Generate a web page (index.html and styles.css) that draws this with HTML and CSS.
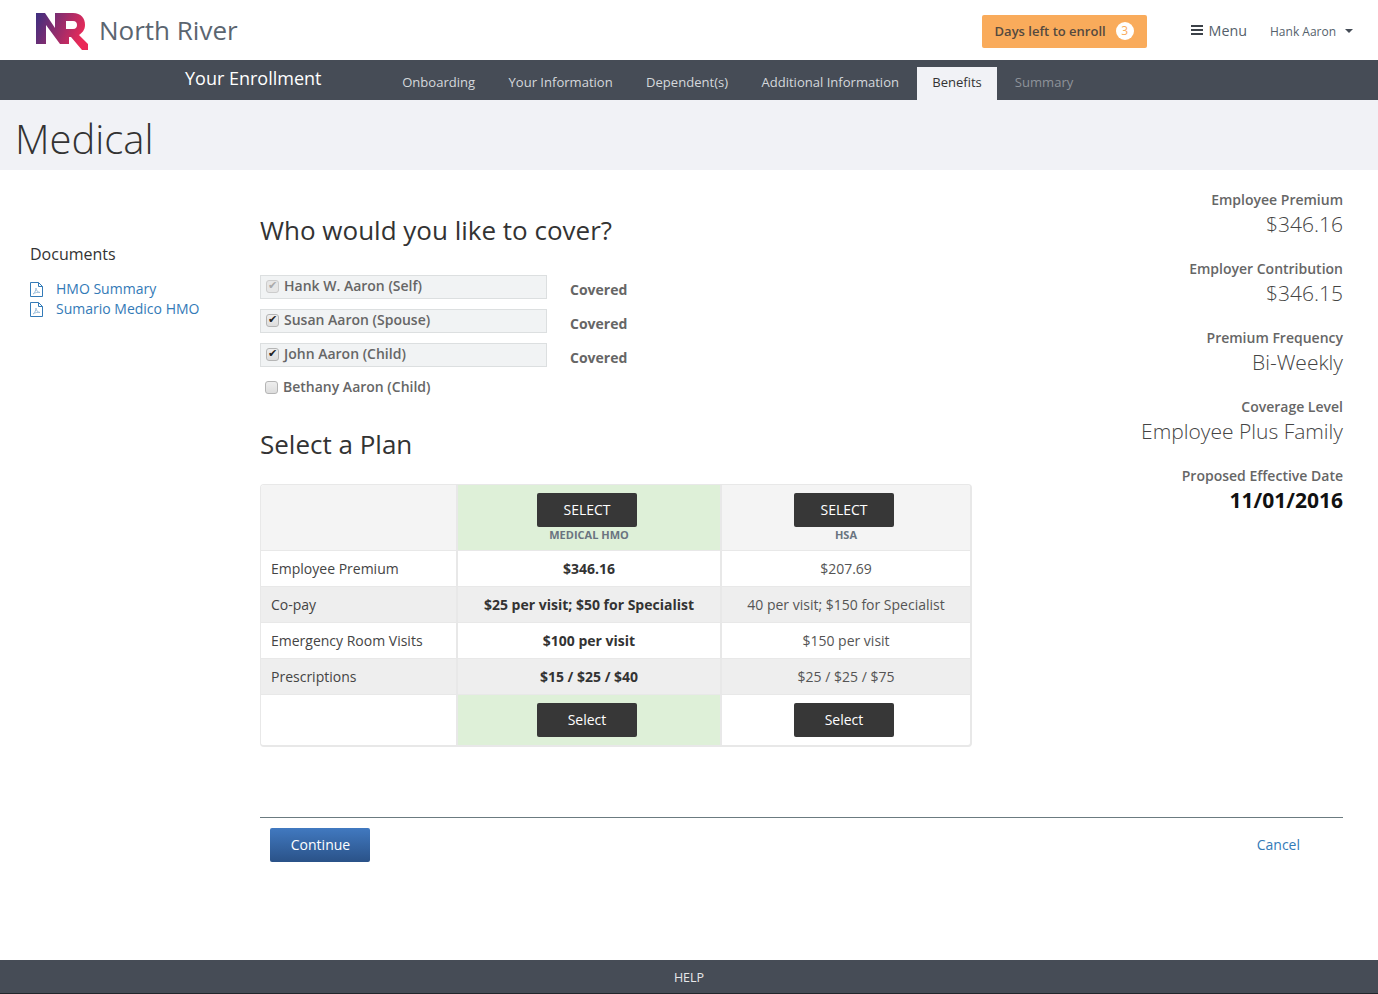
FILE: index.html
```html
<!DOCTYPE html>
<html>
<head>
    <meta charset="utf-8"/>
    <title>Medical</title>
    <link rel="stylesheet" href="styles.css">
</head>
<body>
<div class="topbar">
    <div class="brand">
        <svg class="logo" width="54" height="38" viewBox="0 0 54 38">
            <defs>
                <linearGradient id="nr" x1="0" y1="0" x2="1" y2="0.3">
                    <stop offset="0" stop-color="#3c2f80"/>
                    <stop offset="1" stop-color="#ea2a58"/>
                </linearGradient>
            </defs>
            <path fill="url(#nr)" fill-rule="evenodd" d="M1 0H10L20 15V0H38C46 0 50 5 50 12C50 17 47 20 44 22L53 31V37H47L36 24H34V31H25L11 12V31H1ZM31 8V16H38C41 16 42 14 42 12C42 10 41 8 38 8Z"/>
        </svg>
        <span class="brand-name">North River</span>
    </div>
    <div class="top-right">
        <a class="days">Days left to enroll <span class="days-count">3</span></a>
        <a class="menu"><span class="burger"></span>Menu</a>
        <a class="user">Hank Aaron <span class="caret"></span></a>
    </div>
</div>
<div class="navbar">
    <div class="nav-title">Your Enrollment</div>
    <ul class="tabs">
        <li>Onboarding</li>
        <li>Your Information</li>
        <li>Dependent(s)</li>
        <li>Additional Information</li>
        <li class="active">Benefits</li>
        <li class="muted">Summary</li>
    </ul>
</div>
<div class="title-band"><h1>Medical</h1></div>

<div class="page">
    <div class="sidebar">
        <h4>Documents</h4>
        <a class="doc">
            <svg width="13" height="15" viewBox="0 0 13 15"><path fill="none" stroke="#337ab7" d="M.5 .5H8.500L12.500 4.500V14.500H.5ZM8.500 .5V4.500H12.500"/><path fill="none" stroke="#9dbfdc" d="M3 12C5 10.500 6 8 6 6C6 8.500 8 10.500 10 10.500C8 10 5 10.500 3 12Z"/></svg>
            HMO Summary
        </a>
        <a class="doc">
            <svg width="13" height="15" viewBox="0 0 13 15"><path fill="none" stroke="#337ab7" d="M.5 .5H8.500L12.500 4.500V14.500H.5ZM8.500 .5V4.500H12.500"/><path fill="none" stroke="#9dbfdc" d="M3 12C5 10.500 6 8 6 6C6 8.500 8 10.500 10 10.500C8 10 5 10.500 3 12Z"/></svg>
            Sumario Medico HMO
        </a>
    </div>
    <div class="content">
        <div class="content-top">
            <div class="center">
                <h2>Who would you like to cover?</h2>
                <div class="person">
                    <label class="check on"><input type="checkbox" checked disabled>Hank W. Aaron (Self)</label>
                    <b>Covered</b>
                </div>
                <div class="person">
                    <label class="check on"><input type="checkbox" checked>Susan Aaron (Spouse)</label>
                    <b>Covered</b>
                </div>
                <div class="person">
                    <label class="check on"><input type="checkbox" checked>John Aaron (Child)</label>
                    <b>Covered</b>
                </div>
                <div class="person">
                    <label class="check last"><input type="checkbox">Bethany Aaron (Child)</label>
                </div>
                <h2 class="plan-head">Select a Plan</h2>
                <div class="plan-wrap">
                    <table class="plans">
                        <tr class="head">
                            <td class="c1"></td>
                            <td class="c2 green"><a class="btn-dark caps">SELECT</a><div class="plan-name">MEDICAL HMO</div></td>
                            <td class="c3"><a class="btn-dark caps">SELECT</a><div class="plan-name">HSA</div></td>
                        </tr>
                        <tr>
                            <td class="c1">Employee Premium</td>
                            <td class="c2"><b>$346.16</b></td>
                            <td class="c3">$207.69</td>
                        </tr>
                        <tr class="alt">
                            <td class="c1">Co-pay</td>
                            <td class="c2"><b>$25 per visit; $50 for Specialist</b></td>
                            <td class="c3">40 per visit; $150 for Specialist</td>
                        </tr>
                        <tr>
                            <td class="c1">Emergency Room Visits</td>
                            <td class="c2"><b>$100 per visit</b></td>
                            <td class="c3">$150 per visit</td>
                        </tr>
                        <tr class="alt">
                            <td class="c1">Prescriptions</td>
                            <td class="c2"><b>$15 / $25 / $40</b></td>
                            <td class="c3">$25 / $25 / $75</td>
                        </tr>
                        <tr class="foot">
                            <td class="c1"></td>
                            <td class="c2 green"><a class="btn-dark">Select</a></td>
                            <td class="c3"><a class="btn-dark">Select</a></td>
                        </tr>
                    </table>
                </div>
            </div>
            <div class="summary">
                <div class="sum-item"><label>Employee Premium</label><div class="sum-val">$346.16</div></div>
                <div class="sum-item"><label>Employer Contribution</label><div class="sum-val">$346.15</div></div>
                <div class="sum-item"><label>Premium Frequency</label><div class="sum-val">Bi-Weekly</div></div>
                <div class="sum-item"><label>Coverage Level</label><div class="sum-val">Employee Plus Family</div></div>
                <div class="sum-item"><label>Proposed Effective Date</label><div class="sum-val date">11/01/2016</div></div>
            </div>
        </div>
        <div class="actions">
            <a class="btn-blue">Continue</a>
            <a class="cancel">Cancel</a>
        </div>
    </div>
</div>
<div class="footer">HELP</div>
</body>
</html>
```

FILE: styles.css
```css
* {
    box-sizing: border-box;
}
html, body {
    margin: 0;
    padding: 0;
}
body {
    font-family: "Open Sans", "Liberation Sans", sans-serif;
    font-size: 14px;
    color: #333;
    background: #fff;
    height: 994px;
    display: flex;
    flex-direction: column;
    overflow: hidden;
}
a {
    text-decoration: none;
}
h1, h2, h4 {
    margin: 0;
    font-weight: 400;
}

/* top bar */
.topbar {
    height: 60px;
    display: flex;
    justify-content: space-between;
    align-items: center;
    padding: 0 0 0 35px;
}
.brand {
    display: flex;
    align-items: center;
}
.logo {
    margin-top: 3px;
}
.brand-name {
    font-size: 26px;
    color: #5b6570;
    margin-left: 10px;
}
.top-right {
    display: flex;
    align-items: center;
}
.days {
    width: 165px;
    height: 33px;
    margin-top: 3px;
    background: #f9ab5b;
    border-radius: 2px;
    color: #54493f;
    font-weight: 600;
    font-size: 13px;
    display: flex;
    align-items: center;
    padding: 0 0 2px 13px;
}
.days-count {
    width: 18px;
    height: 18px;
    border-radius: 50%;
    background: #fff;
    color: #f9ab5b;
    font-size: 12px;
    font-weight: 400;
    text-align: center;
    line-height: 18px;
    margin-left: 10px;
}
.menu {
    display: flex;
    align-items: center;
    color: #555f6b;
    font-size: 14.300px;
    margin-left: 44px;
}
.burger {
    width: 12px;
    height: 10px;
    border-top: 2px solid #3b4148;
    border-bottom: 2px solid #3b4148;
    margin-right: 6px;
}
.burger::after {
    content: "";
    display: block;
    height: 2px;
    margin-top: 2px;
    background: #3b4148;
}
.user {
    color: #555f6b;
    font-size: 12px;
    margin: 2px 0 0 23px;
    width: 108px;
    display: flex;
    align-items: center;
}
.caret {
    width: 0;
    height: 0;
    border-left: 4px solid transparent;
    border-right: 4px solid transparent;
    border-top: 4px solid #454c56;
    margin-left: 9px;
}

/* nav */
.navbar {
    height: 40px;
    background: #464c56;
    display: flex;
    padding-left: 185px;
}
.nav-title {
    color: #fff;
    font-size: 18px;
    line-height: 36px;
    width: 200.500px;
}
.tabs {
    list-style: none;
    margin: 7px 0 0;
    padding: 0;
    display: flex;
}
.tabs li {
    height: 33px;
    padding: 0 16.700px;
    line-height: 31px;
    font-size: 13.050px;
    color: #d5d8dc;
}
.tabs li.active {
    background: #f1f2f6;
    color: #333;
    padding: 0 15px;
    margin-left: 1.500px;
}
.tabs li.muted {
    color: #8e939a;
    padding: 0 18px;
}
.title-band {
    height: 70px;
    background: #f1f2f6;
    padding-left: 15px;
}
.title-band h1 {
    font-size: 40px;
    font-weight: 300;
    line-height: 77px;
    color: #333;
}

/* body columns */
.page {
    flex: 1;
    display: flex;
}
.sidebar {
    width: 260px;
    padding: 73px 0 0 30px;
}
.sidebar h4 {
    font-size: 16px;
    line-height: 22px;
    margin-bottom: 14px;
}
.doc {
    display: flex;
    align-items: center;
    color: #337ab7;
    font-size: 14px;
    line-height: 20px;
}
.doc svg {
    margin-right: 13px;
}
.content {
    width: 1083px;
}
.content-top {
    display: flex;
    justify-content: space-between;
    height: 647px;
}
.center {
    width: 712px;
}
.center h2 {
    font-size: 26px;
    line-height: 34px;
    color: #333;
    margin: 43px 0 28px;
}
.center h2.plan-head {
    margin: 16px 0 23px;
}
.person {
    display: flex;
    height: 34px;
}
.person b {
    font-weight: 700;
    color: #666;
    margin-left: 23px;
    line-height: 30px;
}
.check {
    width: 287px;
    height: 24px;
    display: flex;
    align-items: center;
    font-weight: 600;
    color: #666;
    padding: 0 0 3px 5px;
}
.check.on {
    background: #f1f3f4;
    border: 1px solid #dcdfe0;
}
.check.last {
    margin-top: -1px;
    padding-left: 5px;
}
.check input {
    appearance: none;
    margin: 1px 5px 0 0;
    width: 13px;
    height: 13px;
    border: 1px solid #b5b5b5;
    border-radius: 3px;
    background: linear-gradient(#eee, #ddd);
    position: relative;
}
.check input:checked::before {
    content: "\2714";
    position: absolute;
    top: -1px;
    left: 1px;
    font: 11px/12px "DejaVu Sans", sans-serif;
    color: #222;
}
.check input:disabled {
    border-color: #ccc;
    background: #e6e6e6;
}
.check input:disabled::before {
    color: #aaa;
}
.plan-wrap {
    border: 1px solid #e8e8e8;
    border-width: 1px 2px 2px 1px;
    border-radius: 4px;
    overflow: hidden;
    width: 712px;
}
.plans {
    border-collapse: collapse;
    table-layout: fixed;
    width: 709px;
}
.plans td {
    height: 36px;
    padding: 0;
    text-align: center;
    border: 2px solid #e8e8e8;
    border-top: 0;
    border-left: 0;
    border-bottom: 1px solid #e8e8e8;
}
.plans .c1 {
    width: 196px;
    text-align: left;
    padding-left: 10px;
    color: #444;
}
.plans .c2 {
    width: 264px;
}
.plans .c3 {
    border-right: 0;
    color: #555;
}
.plans tr.head td {
    height: 65px;
    background: #f4f4f4;
    vertical-align: top;
    padding-top: 8px;
}
.plans tr.alt td {
    background: #eee;
}
.plans tr.foot td {
    height: 51px;
    padding-top: 1px;
    border-bottom: 0;
}
.plans tr td.green {
    background: #def0d8;
}
.btn-dark {
    display: block;
    width: 100px;
    height: 34px;
    line-height: 33px;
    margin-left: 79px;
    background: #373737;
    color: #fff;
    border-radius: 2px;
    text-align: center;
}
.c3 .btn-dark {
    margin-left: 72px;
}
.plan-name {
    font-size: 11px;
    font-weight: 700;
    line-height: 16px;
    color: #6a7480;
}

/* right summary */
.summary {
    text-align: right;
    padding-top: 20px;
}
.sum-item {
    margin-bottom: 21px;
}
.sum-item label {
    display: block;
    font-weight: 600;
    color: #666;
    line-height: 20px;
}
.sum-val {
    font-size: 21px;
    font-weight: 300;
    line-height: 28px;
    height: 28px;
    color: #444;
}
.sum-val.date {
    color: #111;
    font-weight: 700;
}

/* bottom */
.actions {
    border-top: 1px solid #6b7b80;
    display: flex;
    justify-content: space-between;
    align-items: center;
    padding: 10px 43px 0 10px;
}
.btn-blue {
    width: 100px;
    height: 34px;
    line-height: 33px;
    padding-left: 1px;
    text-align: center;
    color: #fff;
    border-radius: 2px;
    background: linear-gradient(#4179c0, #2a5288);
}
.cancel {
    color: #337ab7;
    margin-bottom: 2px;
}
.footer {
    height: 34px;
    background: #464c56;
    color: #e6e8ea;
    text-align: center;
    font-size: 12.500px;
    line-height: 35px;
    border-bottom: 1px solid #22262b;
}
```
